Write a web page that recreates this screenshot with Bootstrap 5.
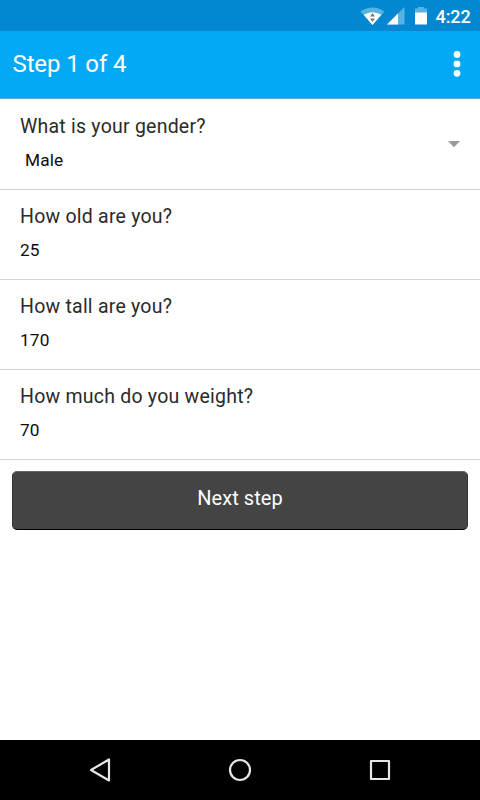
<!DOCTYPE html>
<html lang="en">
<head>
<meta charset="utf-8">
<meta name="viewport" content="width=device-width, initial-scale=1">
<title>Step 1 of 4</title>
<link rel="stylesheet" href="https://cdn.jsdelivr.net/npm/bootstrap@5.3.0/dist/css/bootstrap.min.css">
<style>
body { font-family: Roboto, "Noto Sans", sans-serif; background: #fff; overflow: hidden; }
.status-strip { height: 31px; background: #0288d1; }
.status-icons { height: 31px; width: 75px; }
.clock { font-size: 18px; font-weight: 500; line-height: 33px; width: 45px; padding-left: .5px; letter-spacing: -.1px; }
.app-bar { height: 68px; background: #03a9f4; border-bottom: 1px solid #6aa5cc; padding: 0 13px 2px 12.5px; }
.app-title { font-size: 24px; line-height: 30px; font-weight: 400; letter-spacing: -.12px; }
.app-menu { width: 20px; height: 32px; line-height: 0; }
.question-list { padding-top: 1px; }
.question { height: 90px; padding: 14px 20px 0; border: 0; border-bottom: 1px solid #d4d4d4; }
.list-group-flush > .question:last-child { border-bottom-width: 1px; }
.question-label { font-size: 19.5px; line-height: 26px; letter-spacing: .23px; color: #2a2a2a; }
.question-value { font-size: 17.25px; line-height: 24px; margin-top: 8px; letter-spacing: .12px; color: #0c0c0c; }
.select-value { padding-left: 5px; }
.next-btn { height: 59px; margin: 11px 12px 0; padding: 0 0 5px; font-size: 20px; letter-spacing: .08px; color: #fff; background: #444; border: 1px solid #333; border-top-color: #666; border-bottom-color: #000; border-radius: 5px; }
.next-btn:hover { color: #fff; background: #505050; }
.system-nav { height: 60px; background: #000; }
.system-nav svg { display: block; }
</style>
</head>
<body class="vh-100 d-flex flex-column">
<div class="status-strip d-flex justify-content-end text-white flex-shrink-0">
  <svg class="status-icons" viewBox="360 0 75 31" aria-hidden="true">
    <path d="M360.5 11.5Q372.500 3.500 384.500 11.500L372.500 25Z" fill="#58b3e3"/>
    <path d="M363.700 14.800Q372.500 9.500 381.300 14.800L372.500 25Z" fill="#fff"/>
    <path d="M370 16.500L372.500 13L375 16.500ZM370 18.500L372.500 22L375 18.500Z" fill="#75797c"/>
    <path d="M404.500 7V24.500H387Z" fill="#58b3e3"/>
    <path d="M398 13.500V24.500H387Z" fill="#fff"/>
    <path d="M418 7H424V8.500H427V13H415V8.500H418Z" fill="#58b3e3"/>
    <path d="M415 12.500H427V24.500H415Z" fill="#fff"/>
  </svg>
  <span class="clock">4:22</span>
</div>
<header class="app-bar d-flex align-items-center justify-content-between text-white flex-shrink-0">
  <h1 class="app-title m-0">Step 1 of 4</h1>
  <button class="app-menu btn p-0 border-0" type="button" aria-label="More options">
    <svg width="20" height="32" viewBox="0 0 20 32" fill="#fff"><circle cx="10" cy="6.500" r="3.400"/><circle cx="10" cy="15.900" r="3.400"/><circle cx="10" cy="25.300" r="3.400"/></svg>
  </button>
</header>
<main class="flex-grow-1">
  <div class="question-list list-group list-group-flush rounded-0">
    <div class="question list-group-item d-flex justify-content-between">
      <div>
        <div class="question-label">What is your gender?</div>
        <div class="question-value select-value">Male</div>
      </div>
      <svg class="mt-3" width="12" height="32" viewBox="0 0 12 32" aria-hidden="true"><path d="M0 11H12L6 17.300Z" fill="#999"/></svg>
    </div>
    <div class="question list-group-item">
      <div class="question-label">How old are you?</div>
      <div class="question-value">25</div>
    </div>
    <div class="question list-group-item">
      <div class="question-label">How tall are you?</div>
      <div class="question-value">170</div>
    </div>
    <div class="question list-group-item">
      <div class="question-label">How much do you weight?</div>
      <div class="question-value">70</div>
    </div>
  </div>
  <div class="d-grid"><button class="next-btn btn" type="button">Next step</button></div>
</main>
<nav class="system-nav d-flex justify-content-center align-items-center flex-shrink-0" aria-label="System">
  <svg width="320" height="60" viewBox="80 0 320 60" fill="none" stroke="#e6e6e6" stroke-width="2.200" stroke-linejoin="round">
    <path d="M109 19.500V40.500L91 30Z"/>
    <circle cx="240" cy="30" r="10"/>
    <rect x="371" y="21" width="18" height="18"/>
  </svg>
</nav>
<script src="https://cdn.jsdelivr.net/npm/bootstrap@5.3.0/dist/js/bootstrap.bundle.min.js"></script>
</body>
</html>
